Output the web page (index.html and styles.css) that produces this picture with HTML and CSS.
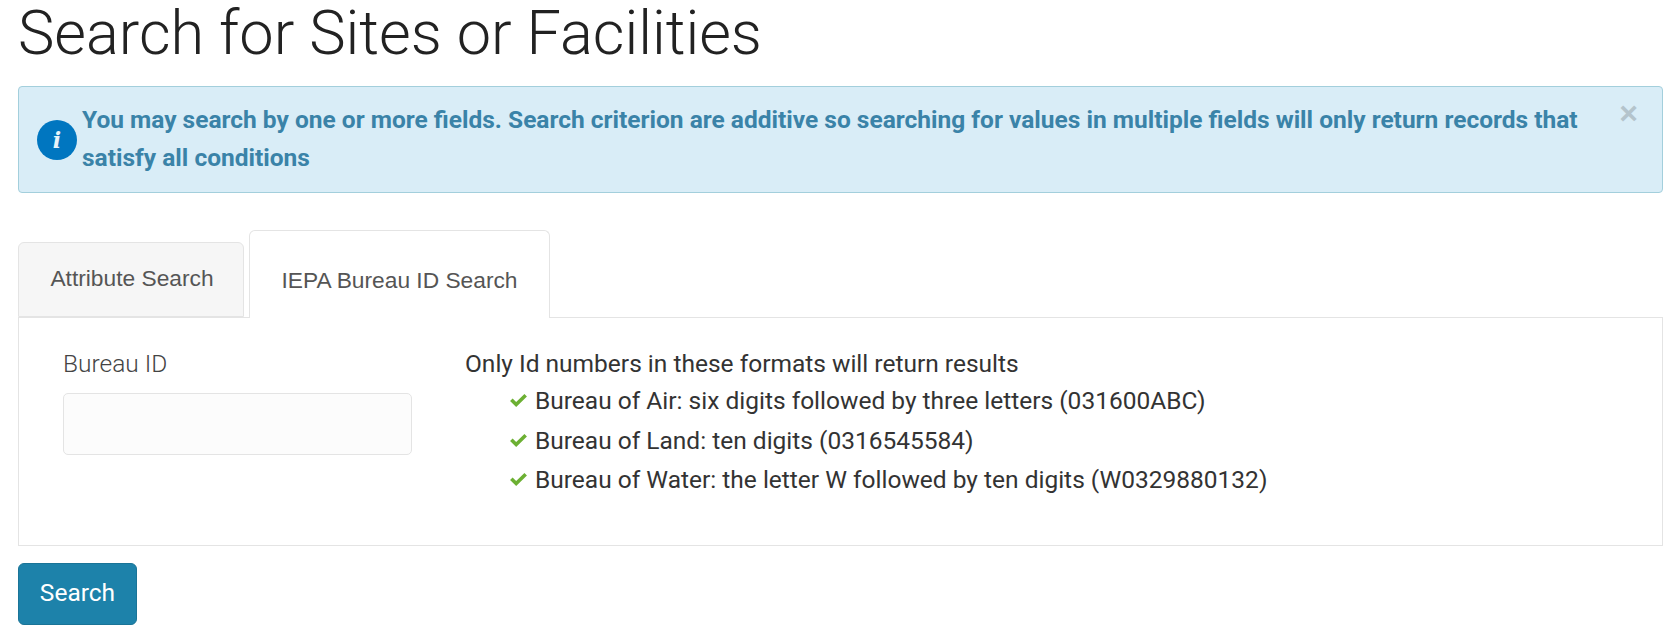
FILE: index.html
```html
<!DOCTYPE html>
<html lang="en">
<head>
  <meta charset="UTF-8">
  <title>Search for Sites or Facilities</title>
  <link rel="stylesheet" href="styles.css">
</head>
<body>

  <h1>Search for Sites or Facilities</h1>

  <div class="alert">
    <span class="alert-icon">i</span>
    <p class="alert-text">You may search by one or more fields. Search criterion are additive so searching for values in multiple fields will only return records that satisfy all conditions</p>
    <span class="alert-close">&times;</span>
  </div>

  <ul class="tabs">
    <li class="tab">Attribute Search</li>
    <li class="tab active">IEPA Bureau ID Search</li>
  </ul>

  <div class="panel">
    <div class="field">
      <label for="bureau">Bureau ID</label>
      <input type="text" id="bureau">
    </div>
    <div class="formats">
      <div class="formats-title">Only Id numbers in these formats will return results</div>
      <ul class="format-list">
        <li><svg class="check" viewBox="0 0 18 14"><path d="M1 7.5 L3.4 5.2 L6.8 8.4 L14.6 .8 L17 3.2 L6.8 13.2 Z"/></svg>Bureau of Air: six digits followed by three letters (031600ABC)</li>
        <li><svg class="check" viewBox="0 0 18 14"><path d="M1 7.5 L3.4 5.2 L6.8 8.4 L14.6 .8 L17 3.2 L6.8 13.2 Z"/></svg>Bureau of Land: ten digits (0316545584)</li>
        <li><svg class="check" viewBox="0 0 18 14"><path d="M1 7.5 L3.4 5.2 L6.8 8.4 L14.6 .8 L17 3.2 L6.8 13.2 Z"/></svg>Bureau of Water: the letter W followed by ten digits (W0329880132)</li>
      </ul>
    </div>
  </div>

  <button class="search-btn">Search</button>

</body>
</html>
```

FILE: styles.css
```css
html, body { margin: 0; padding: 0; }
body { font-family: Roboto, sans-serif; color: #333; background: #fff; padding: 0 15px 0 18px; }

h1 { font-family: Roboto, sans-serif; font-weight: 300; font-size: 61.25px; line-height: 66px; color: #222; margin: 0 0 20px; }

.alert { display: flex; align-items: center; box-sizing: border-box; height: 107px; padding: 0 16px 0 18px; background: #d9edf7; border: 1px solid #a3cfdc; border-radius: 4px; color: #3a83a8; position: relative; }
.alert-icon { flex: none; width: 40px; height: 40px; margin-right: 5px; border-radius: 50%; background: #0076c0; color: #e8f4fa; font-family: "DejaVu Serif", serif; font-style: italic; font-weight: bold; font-size: 22px; line-height: 40px; text-align: center; }
.alert-text { margin: 0; padding: 0 42px 1px 0; font-size: 24.5px; font-weight: 700; line-height: 38.5px; }
.alert-close { position: absolute; top: 10px; right: 24px; font-family: "Liberation Sans", sans-serif; font-size: 32px; font-weight: bold; line-height: 32px; color: #b4c4cc; }

.tabs { display: flex; align-items: flex-end; list-style: none; margin: 37px 0 0; padding: 0; height: 87px; font-family: "Liberation Sans", sans-serif; font-size: 22.75px; color: #555; position: relative; z-index: 1; }
.tab { box-sizing: border-box; height: 75px; width: 226px; margin-right: 5px; padding: 22px 0 0 2px; text-align: center; background: #f6f6f6; border: 1px solid #e4e4e4; border-radius: 6px 6px 0 0; }
.tab.active { height: 88px; width: 301px; padding: 36px 0 0; background: #fff; border-bottom: none; margin-bottom: -1px; }

.panel { display: flex; box-sizing: border-box; height: 229px; padding: 28px 44px 0; border: 1px solid #e4e4e4; }
.field { width: 349px; margin-right: 53px; padding-top: 2px; flex: none; }
.field label { display: block; font-weight: 300; font-size: 24.5px; line-height: 32px; color: #444; margin-bottom: 13px; }
.field input { display: block; box-sizing: border-box; width: 100%; height: 62px; background: #fcfcfc; border: 1px solid #e4e4e4; border-radius: 5px; }

.formats { font-size: 24.5px; color: #333; }
.formats-title { line-height: 35px; }
.format-list { list-style: none; margin: 0; padding: 0 0 0 44px; }
.format-list li { display: flex; align-items: center; line-height: 39.5px; }
.check { width: 19px; height: 15px; margin-right: 7px; flex: none; fill: #6cb033; }

.search-btn { display: block; box-sizing: border-box; margin-top: 17px; padding-bottom: 4px; width: 119px; height: 62px; background: #1d82aa; border: 1px solid #1a7497; border-radius: 6px; color: #fff; font-family: Roboto, sans-serif; font-size: 24.5px; }
```
